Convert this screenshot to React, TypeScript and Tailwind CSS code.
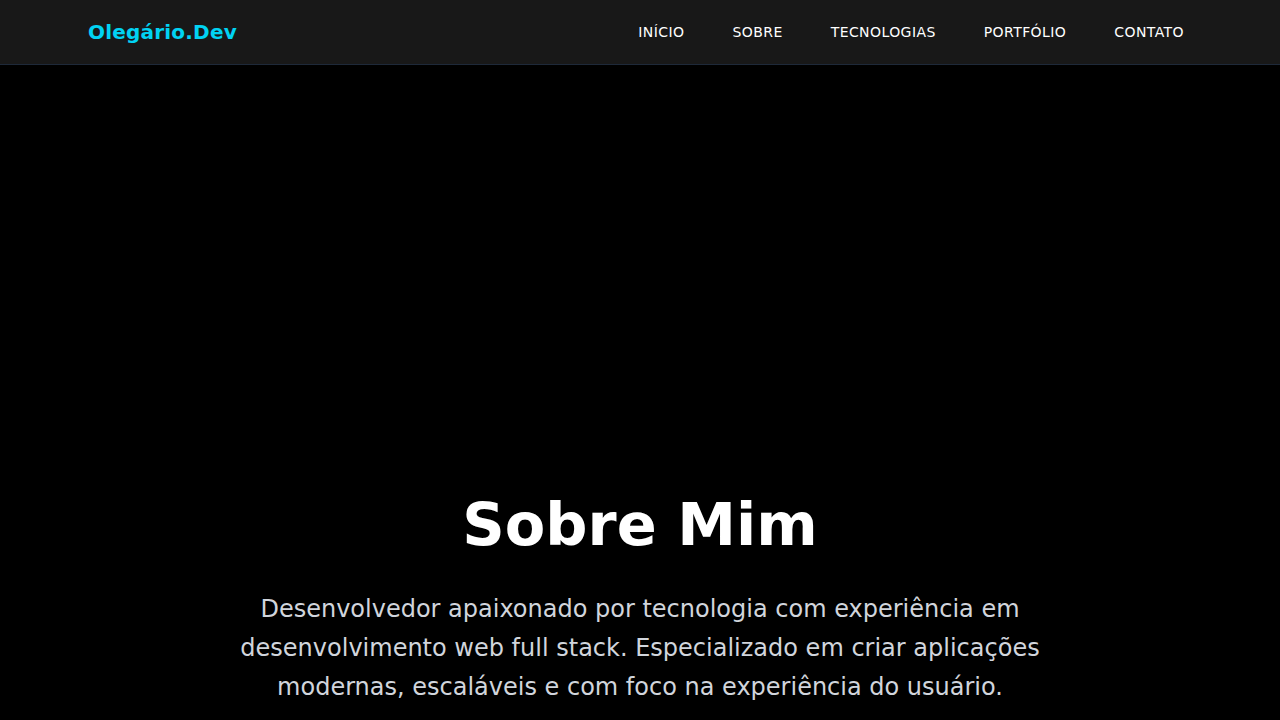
export default function App() {
  return (
    <div className="min-h-screen bg-black text-white" style={{ fontFamily: '"DejaVu Sans", sans-serif' }}>
      <header className="h-[65px] bg-[#181818] border-b border-gray-800">
        <div className="max-w-6xl mx-auto px-6 h-full flex items-center justify-between">
          <div className="text-xl font-bold text-cyan-400 tracking-[0.01em]">Olegário.Dev</div>
          <nav className="flex items-center gap-8">
            {["INÍCIO", "SOBRE", "TECNOLOGIAS", "PORTFÓLIO", "CONTATO"].map((l) => (
              <a key={l} className="px-2 text-sm tracking-[0.03em] text-white">{l}</a>
            ))}
          </nav>
        </div>
      </header>
      <main className="pt-[430px] flex flex-col items-center text-center">
        <h1 className="text-[59px] font-bold leading-[60px] mb-[35px]">Sobre Mim</h1>
        <p className="max-w-[800px] text-2xl leading-relaxed text-gray-300">
          Desenvolvedor apaixonado por tecnologia com experiência em desenvolvimento web full stack. Especializado em criar aplicações modernas, escaláveis e com foco na experiência do usuário.
        </p>
      </main>
    </div>
  );
}
